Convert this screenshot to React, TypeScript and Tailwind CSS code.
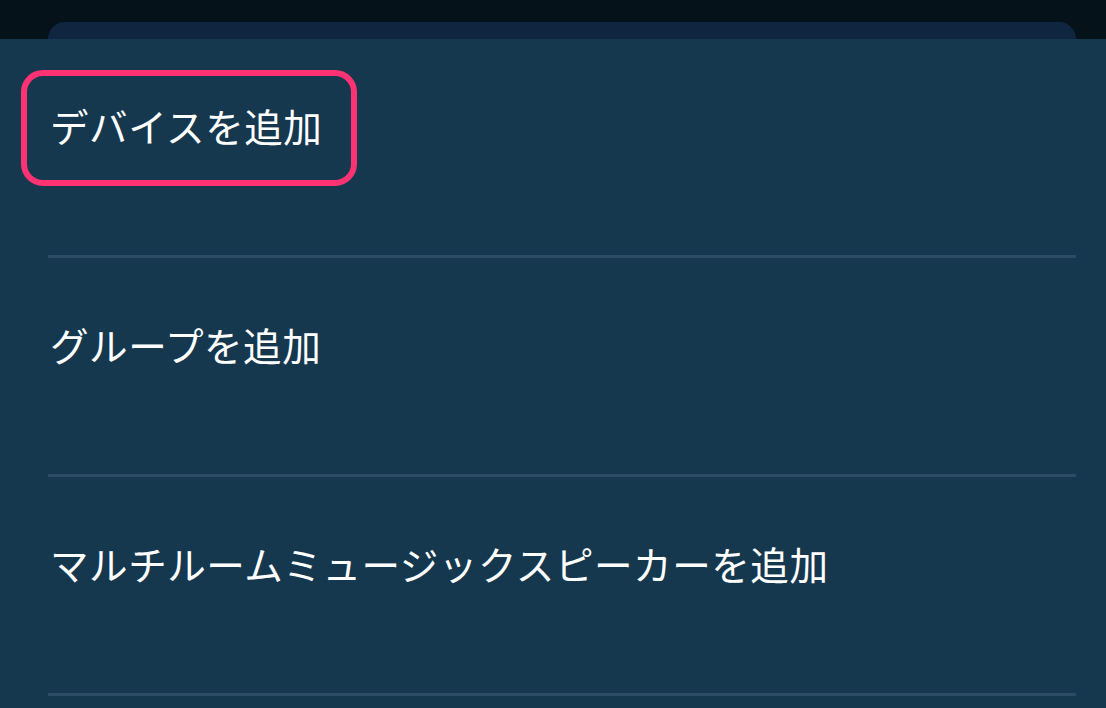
const items = ["デバイスを追加", "グループを追加", "マルチルームミュージックスピーカーを追加"];

export default function App() {
  return (
    <div
      className="w-[1106px] h-[708px] overflow-hidden bg-[#06121a] flex flex-col"
      style={{ fontFamily: '"Noto Sans CJK JP", "Noto Sans", sans-serif' }}
    >
      {/* card peeking out behind the sheet */}
      <div className="h-[39px] shrink-0 pt-[22px] pl-[48px] pr-[30px]">
        <div className="h-full bg-[#0f2540] rounded-t-[18px]" />
      </div>

      {/* sheet */}
      <div className="flex-1 bg-[#15384f]">
        <ul className="pl-[48px] pr-[30px]">
          {items.map((label, i) => (
            <li key={label} className="h-[219px] flex flex-col border-b-[3px] border-[#2c4c65]">
              <div className="h-[178px] flex items-center">
                {i === 0 ? (
                  <span className="-ml-[27px] h-[116px] w-[336px] flex items-center pl-[23px] pb-[6px] border-[6px] border-[#ff3373] rounded-[22px] text-[38.6px] leading-none tracking-[0.5px] text-white">
                    {label}
                  </span>
                ) : (
                  <span className="pl-[2px] pb-[6px] text-[38.6px] leading-none tracking-[0.5px] text-white">{label}</span>
                )}
              </div>
            </li>
          ))}
        </ul>
      </div>
    </div>
  );
}
